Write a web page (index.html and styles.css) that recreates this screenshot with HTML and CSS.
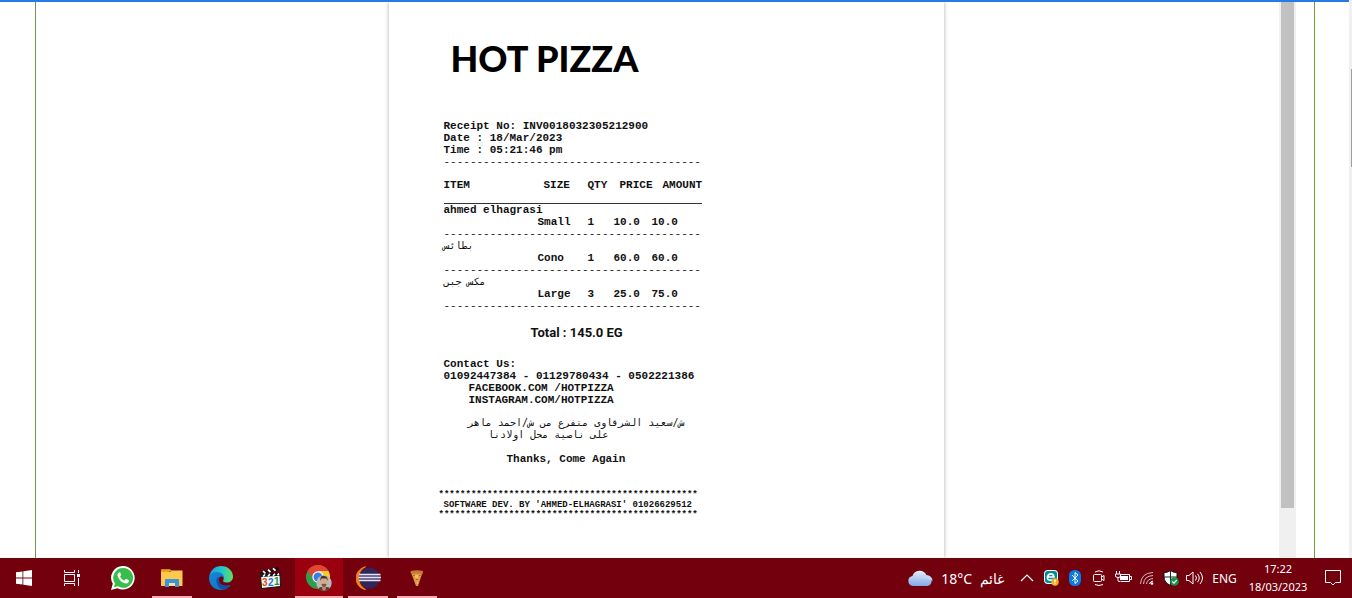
FILE: index.html
```html
<!DOCTYPE html>
<html lang="en">
<head>
<meta charset="utf-8">
<title>Hot Pizza receipt</title>
<link rel="stylesheet" href="styles.css">
</head>
<body>
<main class="viewer">
  <div class="content">
    <div class="frame">
      <article class="paper">
        <h1 class="brand">HOT PIZZA</h1>
        <div class="receipt">
          <p>Receipt No: INV0018032305212900</p>
          <p>Date : 18/Mar/2023</p>
          <p>Time : 05:21:46 pm</p>
          <p class="rule">---------------------------------------</p>
          <table class="items">
            <thead>
              <tr><th class="c-item">ITEM</th><th class="c-size">SIZE</th><th class="c-qty">QTY</th><th class="c-price">PRICE</th><th class="c-amount">AMOUNT</th></tr>
            </thead>
            <tbody>
              <tr><td colspan="5">ahmed elhagrasi</td></tr>
              <tr><td></td><td>Small</td><td>1</td><td>10.0</td><td>10.0</td></tr>
              <tr><td colspan="5" class="rule">---------------------------------------</td></tr>
              <tr><td colspan="5" class="arabic" lang="ar">بطائس</td></tr>
              <tr><td></td><td>Cono</td><td>1</td><td>60.0</td><td>60.0</td></tr>
              <tr><td colspan="5" class="rule">---------------------------------------</td></tr>
              <tr><td colspan="5" class="arabic" lang="ar">مكس جبن</td></tr>
              <tr><td></td><td>Large</td><td>3</td><td>25.0</td><td>75.0</td></tr>
              <tr><td colspan="5" class="rule">---------------------------------------</td></tr>
            </tbody>
          </table>
          <p class="total">Total : 145.0 EG</p>
          <p>Contact Us:</p>
          <p>01092447384 - 01129780434 - 0502221386</p>
          <p class="social">FACEBOOK.COM /HOTPIZZA</p>
          <p class="social">INSTAGRAM.COM/HOTPIZZA</p>
          <div class="address arabic" lang="ar" dir="rtl">
            <p>ش/سعيد الشرقاوى متفرع من ش/احمد ماهر</p>
            <p class="corner">على ناصية محل اولادنا</p>
          </div>
          <p class="thanks">Thanks, Come Again</p>
        </div>
        <footer class="credit">
          <p>************************************************</p>
          <p class="dev">SOFTWARE DEV. BY 'AHMED-ELHAGRASI' 01026629512</p>
          <p>************************************************</p>
        </footer>
      </article>
      <div class="scroll"><div class="thumb"></div></div>
    </div>
  </div>
  <div class="page-scroll"><div class="page-thumb"></div></div>
</main>

<nav class="taskbar" aria-label="Taskbar">
  <div class="group">
    <button class="task" aria-label="Start"><svg width="16" height="16" viewBox="0 0 16 16" fill="#fff"><path d="M0 2.3 6.5 1.4V7.6H0zM7.3 1.3 16 0V7.6H7.3zM0 8.4h6.5v6.2L0 13.7zM7.3 8.4H16V16L7.3 14.7z"/></svg></button>
    <button class="task" aria-label="Task view"><svg width="16" height="16" viewBox="0 0 16 16" fill="none" stroke="#fff"><path d="M.5 0v2.500h10V0M.5 16v-2.500h10V16M.5 4.500v7h10v-7zM14.500 0v3M14.500 8v8"/><path d="M13 4h3v3h-3z" fill="#fff" stroke="none"/></svg></button>
  </div>
  <div class="group apps">
    <button class="task" aria-label="WhatsApp"><svg width="24" height="24" viewBox="0 0 24 24"><path d="M12.200 0A11.800 11.800 0 1 1 6.500 22.300L0 24l1.800-6.200A11.800 11.800 0 0 1 12.200 0z" fill="#fff"/><path d="M12.200 2A9.900 9.900 0 1 1 7 20.300L2.900 21.300 4 17.500A9.900 9.900 0 0 1 12.200 2z" fill="#38bf4b"/><path d="M8.200 6.500c-1.200.5-1.900 1.600-1.600 3.200.8 3.600 4.100 7 8.200 7.700 1.700.2 3.200-.9 3.200-2.600 0-.4-.2-.5-.5-.7l-2.200-1c-.5-.2-.7 0-1 .4l-.8 1c-2-.6-3.600-2.100-4.400-4l.9-1.200c.2-.3.100-.5 0-.8l-.8-1.900c-.2-.3-.6-.3-1-.1z" fill="#fff"/></svg></button>
    <button class="task open" aria-label="File Explorer"><svg width="22" height="20" viewBox="0 0 22 20"><path d="M0 1.500Q0 1 .6 1H9l2 2H0z" fill="#c98a14"/><path d="M0 4h9l1.500-1.500H21.500V18H0z" fill="#fdc94d"/><path d="M0 2h9.500v1L8 4H0z" fill="#e6a11f"/><path d="M4 19v-7q0-1 1-1h12q1 0 1 1v7h-4v-4H8v4z" fill="#3a94dc"/><path d="M8 15h6v3H8z" fill="#fde090"/></svg></button>
    <button class="task" aria-label="Microsoft Edge"><svg width="24" height="24" viewBox="0 0 24 24"><defs><linearGradient id="edge-top"><stop offset="0" stop-color="#239be2"/><stop offset=".55" stop-color="#25c7c8"/><stop offset="1" stop-color="#65dc55"/></linearGradient><linearGradient id="edge-low" x1="0" y1="0" x2="1" y2="1"><stop offset="0" stop-color="#1586d6"/><stop offset="1" stop-color="#1172c5"/></linearGradient></defs><path d="M.3 10C1.500 4 6.300 0 12 0c7 0 12 5 12 10.500 0 4-3 6-6 6-3.500 0-4.500-1.300-3.700-2.500 1.600-2.500-.5-6-5.300-6C5 8 1 9 .3 10z" fill="url(#edge-top)"/><path d="M0 12C0 8 4 5.800 8 6c4 .3 7 2.600 7 5.700-3-3-6 0-5.300 3 .9 4 5.300 6.300 11.800 4.500A12 12 0 0 1 12 24C5 24 0 18.500 0 12z" fill="url(#edge-low)"/><path d="M9.500 10.500C6 12.500 7 21.500 14 23.800c3-.3 6-2.300 7.800-5-6 2.200-12-.3-12.300-5z" fill="#124f9d"/></svg></button>
    <button class="task" aria-label="Media Player Classic"><svg width="24" height="24" viewBox="0 0 24 24"><path d="M2 6 20 1l1 3L3 8.500z" fill="#111"/><path d="m5 5 2.500 2.600M10 3.600l2.500 2.600M15 2.300l2.500 2.400" stroke="#fff" stroke-width="1.800"/><path d="M2.500 8.500 22 7l.5 13.500-19 2z" fill="#f6f6f6" stroke="#111"/><path d="m3 8.500 19-1.500.1 2.800L3 11z" fill="#111"/><path d="m5 10.500 2-2M10 10.100l2-2M15 9.700l2-2M19.500 9.300l1.500-1.800" stroke="#fff" stroke-width="1.600"/><g font-family="Liberation Sans" font-size="10" font-weight="bold"><text x="4" y="20" fill="#dc4c18">3</text><text x="10" y="19.500" fill="#2478c5">2</text><text x="16" y="19" fill="#23963b">1</text></g></svg></button>
    <button class="task open current" aria-label="Google Chrome"><svg width="26" height="26" viewBox="0 0 26 26"><circle cx="12" cy="12" r="12" fill="#2f9e4c"/><path d="M1.600 6A12 12 0 0 1 22.400 6H12L8 15z" fill="#e34435"/><path d="M22.400 6A12 12 0 0 1 12 24l5-9-5-9z" fill="#fbc929"/><circle cx="12" cy="12" r="5.700" fill="#fff"/><circle cx="12" cy="12" r="4.500" fill="#367fe8"/><clipPath id="face"><circle cx="18" cy="18" r="7.700"/></clipPath><g clip-path="url(#face)"><path d="M10 10h16v16H10z" fill="#b9b9b6"/><path d="M11 26q1-4 5-4h4q5 0 5 4z" fill="#433f3d"/><path d="M16 20h4v4l-2 2-2-2z" fill="#bd846a"/><ellipse cx="18" cy="17" rx="3.300" ry="4.700" fill="#dba78b"/><path d="M14.500 16c-.5-5 1.500-5.500 4-5s3.500 2 3 5l-1-2.500h-5z" fill="#443630"/><path d="M15.500 19q2.500-.5 5 0-.5 3-2.500 3t-2.500-3z" fill="#79543f"/></g></svg></button>
    <button class="task open" aria-label="Eclipse"><svg width="25" height="24" viewBox="0 0 25 24"><path d="M9.500.8C-3.500 4-2.500 21.500 9.500 23.500-.2 18 1 5 9.500.8z" fill="#f58220" stroke="#f58220"/><circle cx="13.500" cy="12" r="10.500" fill="#30265b"/><path d="M3 8.500h21.500M2.500 11.500H25M3 14.500h21.500" stroke="#e8e5ef" stroke-width="1.600"/><path d="M3 10h21.500M3 13h21.500" stroke="#8c81b5"/></svg></button>
    <button class="task open" aria-label="Hot Pizza"><svg width="14" height="17" viewBox="0 0 14 17"><path d="M1 2.500h11.500L8 16H6z" fill="#df9a46"/><path d="M.5 1q6.500-1.500 12.500 0l-.5 3q-5.500-1-11.500 0z" fill="#c97832"/><path d="M3 5h2v1H3zM9 5h2l-1 1H9zM6 9h2v1H6z" fill="#a9682c"/><path d="M5 5h3v3H5zM7 12h1v2H7z" fill="#f0be69"/></svg></button>
  </div>

  <a class="weather" href="#weather">
    <svg width="25" height="16" viewBox="0 0 25 16"><defs><linearGradient id="cloud" x2="0" y2="1"><stop stop-color="#e6eefc"/><stop offset="1" stop-color="#80a8e7"/></linearGradient></defs><path d="M5 16a5 5 0 0 1-.6-9.900A7.500 7.500 0 0 1 18.500 5.200 5.500 5.500 0 0 1 19.500 16z" fill="url(#cloud)"/><path d="M10 8q3-4 8.500-2.800A5.500 5.500 0 0 1 24.500 11Q18 6 10 8z" fill="#c1d5f6"/></svg>
    <span>18°C</span><span lang="ar">غائم</span>
  </a>
  <div class="tray">
    <button class="tray-icon" aria-label="Show hidden icons"><svg width="14" height="14" viewBox="0 0 14 14" fill="none" stroke="#fff" stroke-width="1.200"><path d="m1 10 6-6 6 6"/></svg></button>
    <button class="tray-icon" aria-label="ESET security"><svg width="16" height="16" viewBox="0 0 16 16"><rect x="1" y="0" width="14" height="14" rx="4" fill="#e9ffff"/><rect x="2" y="1" width="12" height="12" rx="3" fill="#008c95"/><path d="M4.500 7h6.500Q10.500 3.800 7.800 3.800T4.500 7t3.300 3.200q1.500 0 2.500-.7" fill="none" stroke="#fff" stroke-width="1.700"/><circle cx="12" cy="12" r="3.700" fill="#f3af22"/><path d="M12 9.500v3M12 13.300v1" stroke="#fff" stroke-width="1.200"/></svg></button>
    <button class="tray-icon" aria-label="Bluetooth"><svg width="12" height="16" viewBox="0 0 12 16"><rect width="12" height="16" rx="5.500" fill="#087be4"/><path d="m3 5 6 6-3 2.500v-11L9 5l-6 6" fill="none" stroke="#fff"/></svg></button>
    <button class="tray-icon" aria-label="Meet now"><svg width="14" height="16" viewBox="0 0 14 16" fill="none" stroke="#fff"><rect x="1.500" y="4.500" width="8" height="7" rx="1"/><path d="m9.500 7 2.500-1.500v5L9.500 9M3 2q4-2.500 8 0M3 14.500q4 2 8 0"/></svg></button>
    <button class="tray-icon" aria-label="Battery charging"><svg width="17" height="14" viewBox="0 0 17 14" fill="none" stroke="#fff"><path d="M5.500 3.500h9v7h-9M15 5.500h1.500v3H15M1.500 0v3M4.500 0v3M.5 3h5v2q0 1.500-2.500 1.500T.5 5zM3 6.500V10q0 .5 2 .5"/><path d="M5 5h8v4H5z" fill="#fff" stroke="none"/></svg></button>
    <button class="tray-icon" aria-label="Wi-Fi"><svg width="14" height="14" viewBox="0 0 14 14" fill="none" stroke="#d8b9bd"><path d="M.5 13Q1 2 13 1.500M3.500 13Q4 5 13 4.500M6.500 13Q7 8 13 7.500" /><path d="M9.500 13q.5-2.500 3.500-3" stroke="#fff"/><circle cx="12" cy="12.500" r="1.300" fill="#fff" stroke="none"/></svg></button>
    <button class="tray-icon" aria-label="Windows Security"><svg width="16" height="16" viewBox="0 0 16 16"><path d="M7.500.5q3 2.300 6.500 2v4.500q0 5.500-6.500 8.500Q1 12.500 1 7V2.500q3.500.3 6.500-2z" fill="#fff" stroke="#111"/><path d="M7.500 1v14M1 7h13" stroke="#222"/><circle cx="11.500" cy="11.500" r="4.300" fill="#159447"/><path d="m9.300 11.500 1.700 1.700 2.800-3.200" fill="none" stroke="#fff" stroke-width="1.200"/></svg></button>
    <button class="tray-icon" aria-label="Volume"><svg width="18" height="14" viewBox="0 0 18 14" fill="none" stroke="#fff"><path d="M.5 4.500h2.500L7 1v12L3 9.500H.5zM9.500 4.500q2 2.500 0 5M11.500 2.800q3.500 4.200 0 8.400M14 1q5 6 0 12"/></svg></button>
  </div>
  <button class="lang">ENG</button>
  <button class="clock"><time>17:22</time><time>18/03/2023</time></button>
  <button class="notice" aria-label="Notifications"><svg width="16" height="17" viewBox="0 0 16 17" fill="none" stroke="#fff"><path d="M.5.5h15v12h-5L8 15l-2.500-2.500h-5z"/></svg></button>
</nav>
</body>
</html>
```
FILE: styles.css
```css
* { box-sizing: border-box; }

body {
  margin: 0;
  height: 100vh;
  display: flex;
  flex-direction: column;
  overflow: hidden;
  background: #fff;
  font-family: "Noto Sans", sans-serif;
}

p, h1 { margin: 0; }
svg { display: block; flex: none; }

.viewer {
  flex: 1;
  min-height: 0;
  display: flex;
}

.content {
  flex: 1;
  display: flex;
  padding: 0 34px 0 35px;
  border-top: 2px solid #257ae4;
}

.frame {
  flex: 1;
  display: flex;
  padding-left: 17px;
  padding-right: 18px;
  border-left: 1px solid #6b9a4c;
  border-right: 1px solid #6b9f37;
  overflow: hidden;
}

.paper {
  width: 100%;
  max-width: 555px;
  margin: 0 auto;
  padding: 32px 50px 0;
  background: #fff;
  box-shadow: 0 0 4px rgba(40, 40, 60, 0.4);
  color: #111;
}

.brand {
  padding-left: 12px;
  font: 900 36px/48px Lato, sans-serif;
  color: #000;
}

.receipt {
  max-width: 260px;
  margin: 38px 0 0 5px;
  font: bold 11px/12px "Liberation Mono", monospace;
}
.receipt p, .credit p { white-space: nowrap; }

.rule { font-weight: normal; color: #222; }

.items {
  width: 258px;
  margin-top: 11px;
  table-layout: fixed;
  border-collapse: collapse;
}

.items th, .items td { padding: 0; text-align: left; line-height: 12px; }
.items th { height: 24px; vertical-align: top; border-bottom: 1px solid #333; }
.items .c-size, .items .c-price { padding-left: 6px; }
.items .c-amount { padding-left: 11px; }
.c-item { width: 94px; }
.c-size { width: 50px; }
.c-qty { width: 26px; }
.c-price { width: 38px; }

.arabic { font: 10px/12px "DejaVu Sans Mono", monospace; }

.receipt .total {
  padding: 11px 0 15px 87px;
  font: bold 13px/20px Roboto, sans-serif;
}

.social { padding-left: 25px; }
.address { margin-top: 11px; padding-right: 19px; }
.corner { padding-right: 76px; }
.thanks { padding: 12px 0 0 63px; }

.credit {
  margin-top: 25px;
  font: bold 9px/10px "Liberation Mono", monospace;
}
.dev { padding-left: 5px; }

.scroll { width: 17px; background: #f0f0f0; padding: 0 2px; }
.thumb { height: 91%; background: #c1c1c1; }

.page-scroll { width: 3px; padding: 69px 0 0 2px; background: #f0f0f0; }
.page-thumb { height: 98px; background: #a0a0a0; }

.taskbar {
  height: 40px;
  display: flex;
  align-items: stretch;
  background: #72000d;
  color: #fff;
}

button {
  margin: 0;
  padding: 0;
  border: 0;
  background: none;
  color: inherit;
  font: inherit;
}

.group { display: flex; }
.apps { gap: 1px; margin-left: 3px; }
.task {
  width: 48px;
  display: flex;
  align-items: center;
  justify-content: center;
  position: relative;
}
.open::after {
  content: "";
  position: absolute;
  bottom: 0;
  left: 4px;
  right: 4px;
  height: 2px;
  background: #ffabb6;
}
.current { background: #9b000f; }
.current::after { left: 0; right: 0; }

.weather {
  margin-left: auto;
  display: flex;
  align-items: center;
  gap: 8px;
  padding-right: 11px;
  color: inherit;
  text-decoration: none;
  font-size: 14px;
}

.tray { display: flex; }
.tray-icon {
  width: 24px;
  display: flex;
  align-items: center;
  justify-content: center;
}

.lang { width: 35px; font-size: 12px; }
.clock {
  width: 72px;
  display: flex;
  flex-direction: column;
  justify-content: center;
  align-items: center;
  font-size: 11px;
  line-height: 18px;
}
.notice {
  width: 38px;
  display: flex;
  align-items: center;
  justify-content: center;
}
```
